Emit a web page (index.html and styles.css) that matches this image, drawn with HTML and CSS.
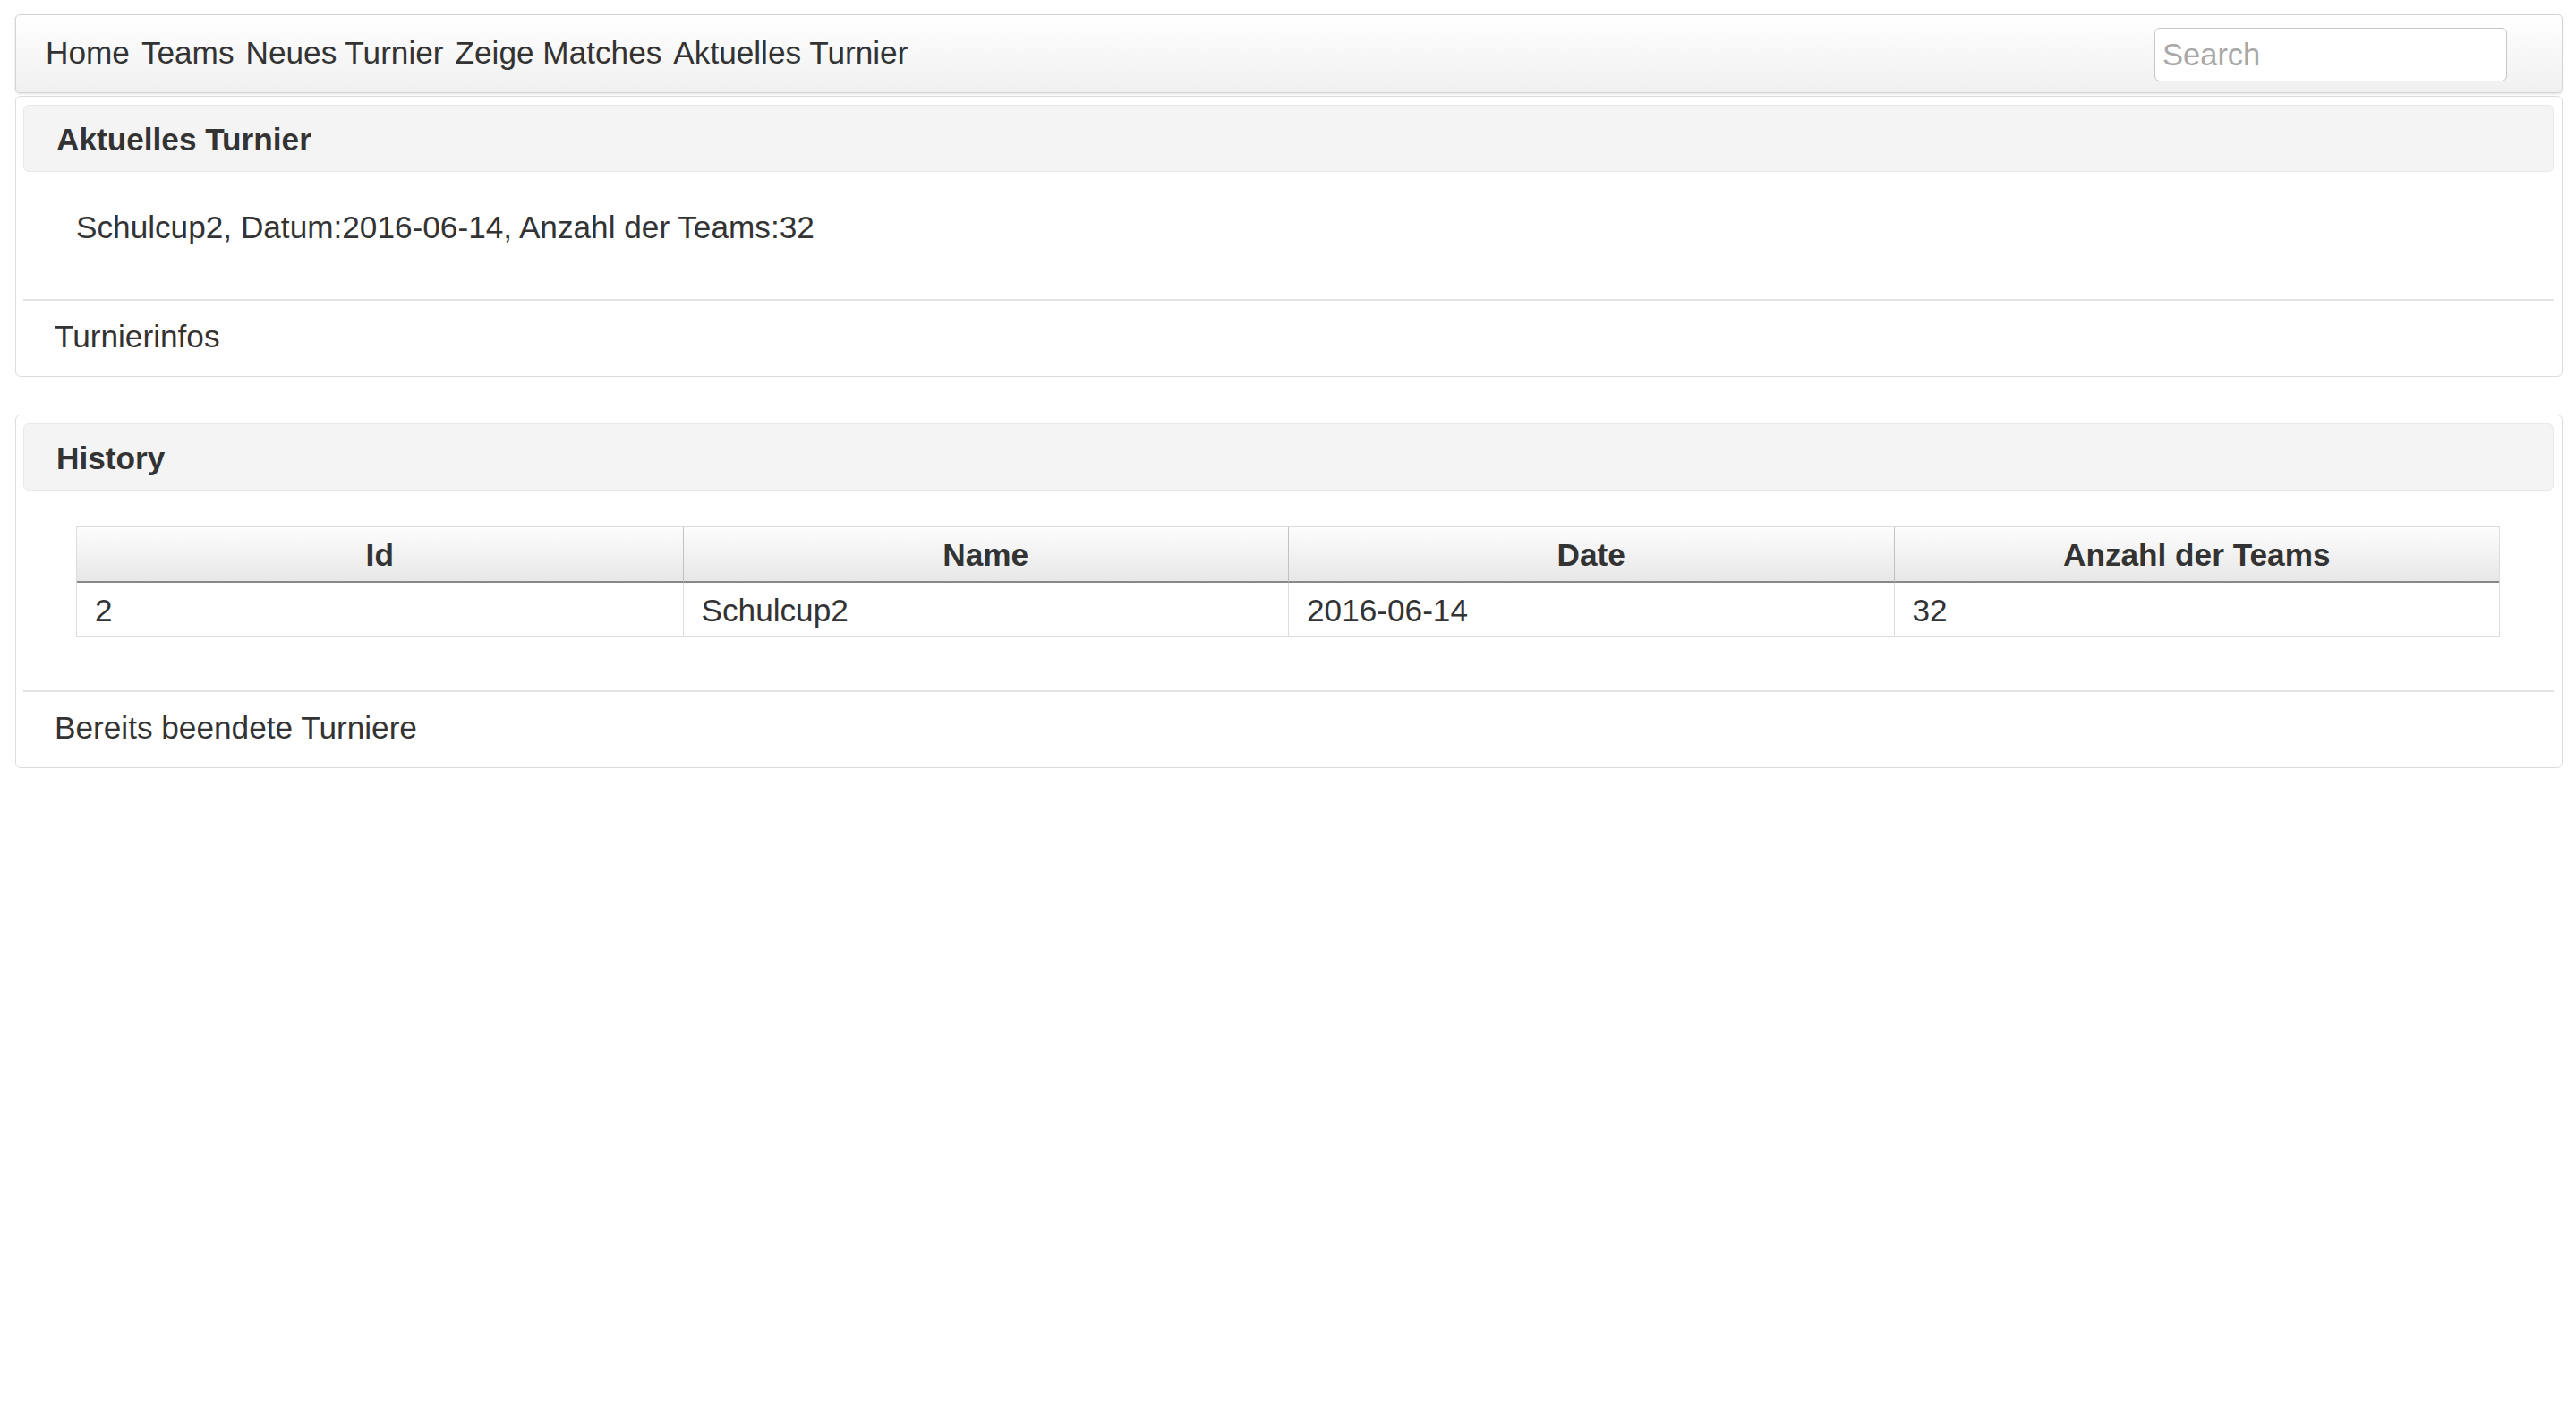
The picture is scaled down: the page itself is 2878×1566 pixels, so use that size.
FILE: index.html
```html
<!DOCTYPE html>
<html lang="de">
<head>
<meta charset="utf-8">
<title>Turnier</title>
<link rel="stylesheet" href="styles.css">
</head>
<body>
<div class="page">
  <nav class="navbar">
    <ul class="nav-links">
      <li><a href="#">Home</a></li>
      <li><a href="#">Teams</a></li>
      <li><a href="#">Neues Turnier</a></li>
      <li><a href="#">Zeige Matches</a></li>
      <li><a href="#">Aktuelles Turnier</a></li>
    </ul>
    <input class="search" type="text" placeholder="Search">
  </nav>

  <section class="panel">
    <div class="panel-heading">Aktuelles Turnier</div>
    <div class="panel-body panel-body-current">
      <p class="info">Schulcup2, Datum:2016-06-14, Anzahl der Teams:32</p>
    </div>
    <div class="panel-footer">Turnierinfos</div>
  </section>

  <section class="panel panel-history">
    <div class="panel-heading">History</div>
    <div class="panel-body panel-body-history">
      <table class="history-table">
        <thead>
          <tr><th>Id</th><th>Name</th><th>Date</th><th>Anzahl der Teams</th></tr>
        </thead>
        <tbody>
          <tr><td>2</td><td>Schulcup2</td><td>2016-06-14</td><td>32</td></tr>
        </tbody>
      </table>
    </div>
    <div class="panel-footer">Bereits beendete Turniere</div>
  </section>
</div>
</body>
</html>
```

FILE: styles.css
```css
html, body {
  margin: 0;
  padding: 0;
  background: #ffffff;
}

body {
  font-family: "Liberation Sans", Arial, Helvetica, sans-serif;
  font-size: 35.2px;
  line-height: 40px;
  color: #333333;
}

.page {
  padding: 16px 15px 0 17px;
}

/* Navbar */
.navbar {
  display: flex;
  align-items: center;
  justify-content: space-between;
  box-sizing: border-box;
  height: 88px;
  padding: 0 61px 0 33px;
  border: 1px solid #d4d4d4;
  border-radius: 5px;
  background: linear-gradient(#ffffff, #f0f0f0);
  box-shadow: 0 1px 3px rgba(0, 0, 0, 0.12);
}

.nav-links {
  display: flex;
  gap: 13px;
  list-style: none;
  margin: 0;
  padding: 0 0 2px 0;
}

.nav-links a {
  color: #333333;
  text-decoration: none;
}

.search {
  box-sizing: border-box;
  width: 394px;
  height: 60px;
  margin-top: 2px;
  padding: 0 8px;
  border: 1px solid #c6c6c6;
  border-radius: 6px;
  background: #ffffff;
  font-family: inherit;
  font-size: 34.5px;
  color: #333333;
  outline: none;
}

.search::placeholder {
  color: #a8a8a8;
}

/* Panels */
.panel {
  margin-top: 3px;
  padding: 9px 9px 0 8px;
  border: 1px solid #dddddd;
  border-radius: 6px;
  background: #ffffff;
}

.panel-history {
  margin-top: 42px;
}

.panel-heading {
  padding: 18px 36px 15px 36px;
  border: 1px solid #e9e9e9;
  border-radius: 6px;
  background: #f4f4f4;
  font-weight: bold;
}

.panel-body {
  padding: 42px 60px 60px 59px;
}

.panel-body-history {
  padding-top: 40px;
}

.info {
  margin: 0;
}

.panel-footer {
  padding: 20px 0 24px 35px;
  border-top: 2px solid #e3e3e3;
}

/* Table */
.history-table {
  width: 100%;
  table-layout: fixed;
  border-collapse: separate;
  border-spacing: 0;
  border: 1px solid #dddddd;
}

.history-table th {
  padding: 11px 20px 9px;
  font-weight: bold;
  text-align: center;
  background: linear-gradient(#fdfdfd, #e7e7e7);
  border-bottom: 2px solid #888888;
}

.history-table th + th {
  border-left: 1px solid #c2c2c2;
}

.history-table td {
  padding: 11px 20px 8px;
  text-align: left;
}

.history-table td + td {
  border-left: 1px solid #dddddd;
}
```
